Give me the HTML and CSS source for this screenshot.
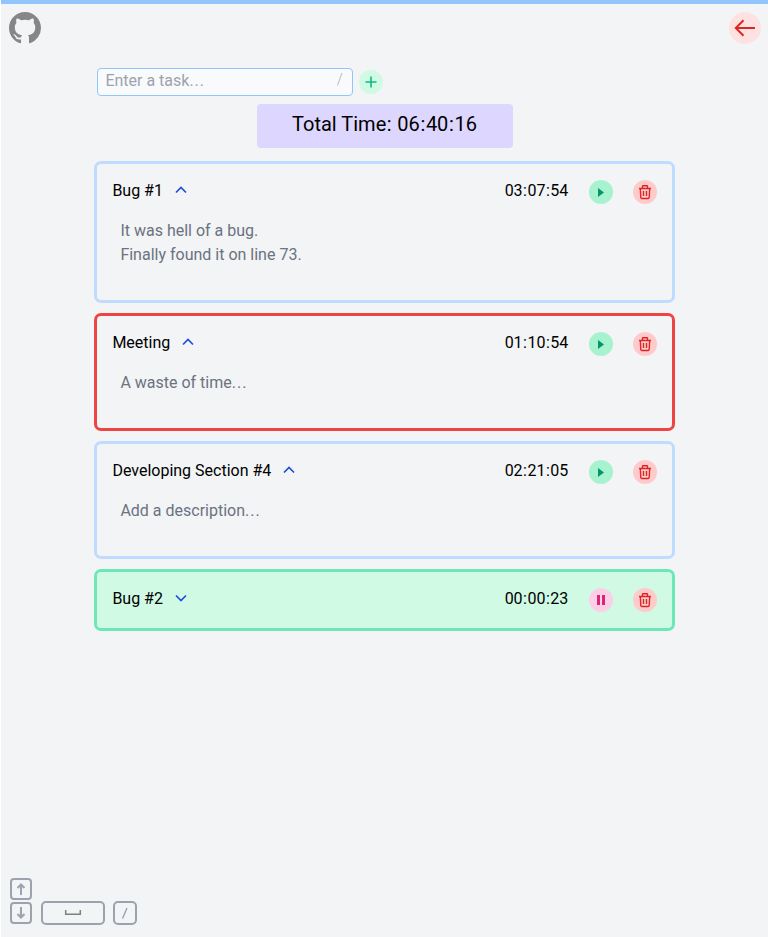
FILE: index.html
```html
<!DOCTYPE html>
<html lang="en">
<head>
<meta charset="utf-8">
<title>Task Timer</title>
<link rel="stylesheet" href="styles.css">
</head>
<body>
<svg class="defs" aria-hidden="true">
  <symbol id="up" viewBox="0 0 20 20"><path d="M5 12.500l5-5 5 5" fill="none" stroke="currentColor" stroke-width="1.700"/></symbol>
  <symbol id="down" viewBox="0 0 20 20"><path d="M5 7.500l5 5 5-5" fill="none" stroke="currentColor" stroke-width="1.700"/></symbol>
  <symbol id="play" viewBox="0 0 24 24"><path d="M9 8v9l6-4.500z" fill="currentColor"/></symbol>
  <symbol id="pause" viewBox="0 0 24 24"><path d="M8 7h3v10H8zM13 7h3v10h-3z" fill="currentColor"/></symbol>
  <symbol id="trash" viewBox="0 0 24 24"><path d="M6 8.500h12M9.500 8.500V6.300q0-.6.600-.6h3.800q.6 0 .6.600v2.200M7.300 8.500l.5 9q.1 1 1 1h6.400q.9 0 1-1l.5-9M10.500 11v5M13.500 11v5" fill="none" stroke="currentColor" stroke-width="1.400"/></symbol>
</svg>
<div class="page">
  <header class="top">
    <a class="github" href="#" aria-label="GitHub"><svg viewBox="0 0 16 16"><path fill="currentColor" fill-rule="evenodd" d="M8 0C3.580 0 0 3.580 0 8c0 3.540 2.290 6.530 5.470 7.590.4.070.55-.17.550-.38 0-.19-.01-.82-.01-1.490-2.010.37-2.530-.49-2.690-.94-.09-.23-.48-.94-.82-1.130-.28-.15-.68-.52-.01-.53.630-.01 1.080.58 1.230.82.720 1.210 1.870.87 2.330.66.070-.52.280-.87.510-1.070-1.780-.2-3.640-.89-3.640-3.950 0-.87.310-1.590.82-2.150-.08-.2-.36-1.020.08-2.120 0 0 .67-.21 2.200.82.640-.18 1.320-.27 2-.27s1.360.09 2 .27c1.530-1.040 2.200-.82 2.200-.82.440 1.100.16 1.920.08 2.120.51.560.82 1.270.82 2.150 0 3.070-1.870 3.750-3.650 3.950.29.250.54.730.54 1.480 0 1.070-.01 1.930-.01 2.200 0 .21.150.46.550.38A8.010 8.010 0 0 0 16 8c0-4.420-3.580-8-8-8z"/></svg></a>
    <button class="back" aria-label="Back"><svg viewBox="0 0 32 32"><path d="M26 16H7M14.500 8.300L6.800 16l7.700 7.700" fill="none" stroke="currentColor" stroke-width="2"/></svg></button>
  </header>
  <main class="main">
    <div class="entry">
      <div class="field"><span>Enter a task<span class="dots">...</span></span><svg class="slash" viewBox="0 0 8 16"><path d="M1.500 14.500L6 2" fill="none" stroke="currentColor" stroke-width="1.200"/></svg></div>
      <button class="round add" aria-label="Add"><svg viewBox="0 0 24 24"><path d="M12 6.500v11M6.500 12h11" stroke="currentColor" stroke-width="1.600"/></svg></button>
    </div>
    <div class="total">Total Time<i>:</i> 06<i>:</i>40<i>:</i>16</div>
    <div class="tasks">
      <section class="task">
        <div class="row"><span>Bug #1</span><svg class="chevron"><use href="#up"/></svg><time>03<i>:</i>07<i>:</i>54</time><button class="round start"><svg><use href="#play"/></svg></button><button class="round delete"><svg><use href="#trash"/></svg></button></div>
        <p class="note">It was hell of a bug.<br>Finally found it on line 73.</p>
      </section>
      <section class="task selected">
        <div class="row"><span>Meeting</span><svg class="chevron"><use href="#up"/></svg><time>01<i>:</i>10<i>:</i>54</time><button class="round start"><svg><use href="#play"/></svg></button><button class="round delete"><svg><use href="#trash"/></svg></button></div>
        <p class="note">A waste of time<span class="dots">...</span></p>
      </section>
      <section class="task">
        <div class="row"><span>Developing Section #4</span><svg class="chevron"><use href="#up"/></svg><time>02<i>:</i>21<i>:</i>05</time><button class="round start"><svg><use href="#play"/></svg></button><button class="round delete"><svg><use href="#trash"/></svg></button></div>
        <p class="note">Add a description<span class="dots">...</span></p>
      </section>
      <section class="task running">
        <div class="row"><span>Bug #2</span><svg class="chevron"><use href="#down"/></svg><time>00<i>:</i>00<i>:</i>23</time><button class="round stop"><svg><use href="#pause"/></svg></button><button class="round delete"><svg><use href="#trash"/></svg></button></div>
      </section>
    </div>
  </main>
  <footer class="keys">
    <div class="arrows">
      <svg class="arrow" viewBox="0 0 22 22"><rect x="1" y="1" width="20" height="20" rx="3"/><path d="M11 17V6.500M7.500 10L11 6.500l3.500 3.500"/></svg>
      <svg class="arrow" viewBox="0 0 22 22"><rect x="1" y="1" width="20" height="20" rx="3"/><path d="M11 5v10.500M7.500 12l3.500 3.500 3.500-3.500"/></svg>
    </div>
    <svg class="space" viewBox="0 0 64 24"><rect x="1" y="1" width="62" height="22" rx="4"/><path class="bar" d="M24.700 9v4.300h14.600V9"/></svg>
    <svg class="slash-key" viewBox="0 0 24 24"><rect x="1" y="1" width="22" height="22" rx="4"/><path class="thin" d="M9.500 17.500L14 7"/></svg>
  </footer>
</div>
</body>
</html>
```

FILE: styles.css
```css
* { box-sizing: border-box; }
body { margin: 0; font: 16px/24px Roboto, sans-serif; color: #000; background: #fff; }
svg { display: block; }
button { border: 0; padding: 0; font: inherit; }
i { font-style: normal; padding: 0 .032em; }
.dots { letter-spacing: 1px; }
.defs { display: none; }
.page { margin-left: 1px; height: 937px; display: flex; flex-direction: column; background: #f3f4f6; border-top: 4px solid #93c5fd; }
.top { display: flex; justify-content: space-between; padding: 8px 7px 0 8px; }
.github { width: 32px; height: 32px; color: #868686; }
.back { width: 32px; height: 32px; border-radius: 50%; background: #fee2e2; color: #dc2626; }
.main { width: 75%; margin: 24px auto 0; }
.entry { display: flex; align-items: center; gap: 6px; }
.field { width: 256px; height: 28px; display: flex; justify-content: space-between; border: 1px solid #93c5fd; border-radius: 4px; background: #f9fafb; color: #9ca3af; padding: 0 8px 0 7.500px; }
.slash { width: 8px; height: 16px; margin-top: 2px; color: #c4c8ce; }
.round { width: 24px; height: 24px; flex: none; border-radius: 50%; }
.round svg { width: 24px; height: 24px; }
.add { background: #d1fae5; color: #10b981; }
.total { width: 256px; height: 44px; margin: 8px auto 16px; padding-top: 6px; border-radius: 4px; background: #ddd6fe; font-size: 20px; line-height: 28px; text-align: center; }
.tasks { display: flex; flex-direction: column; gap: 16px; }
.task { padding: 15px 15px 17px 15.500px; border-radius: 4px; box-shadow: 0 0 0 3px #bfdbfe; }
.selected { box-shadow: 0 0 0 3px #ef4444; }
.running { background: #d1fae5; box-shadow: 0 0 0 3px #6ee7b7; }
.row { display: flex; height: 24px; }
.row .round { margin-top: 1px; }
.chevron { width: 20px; height: 20px; margin: 1px 0 0 8px; color: #1d4ed8; }
.row time { margin: 0 20.800px 0 auto; }
.start { background: #a7f3d0; color: #059669; }
.stop { background: #fbcfe8; color: #db2777; }
.row .delete { margin-left: 20px; background: #fecaca; color: #dc2626; }
.note { margin: 16px 0 0; padding: 0 8px 16px; color: #6b7280; }
.keys { display: flex; align-items: flex-end; margin: auto 0 12px 9px; fill: none; stroke: #9ca3af; stroke-width: 2; }
.arrows { display: grid; gap: 2px; margin-bottom: 1px; }
.arrow { width: 22px; height: 22px; }
.space { width: 64px; height: 24px; margin-left: 9px; }
.slash-key { width: 24px; height: 24px; margin-left: 8px; }
.bar { stroke: #808080; stroke-width: 1.500; }
.thin { stroke-width: 1.400; }
```
